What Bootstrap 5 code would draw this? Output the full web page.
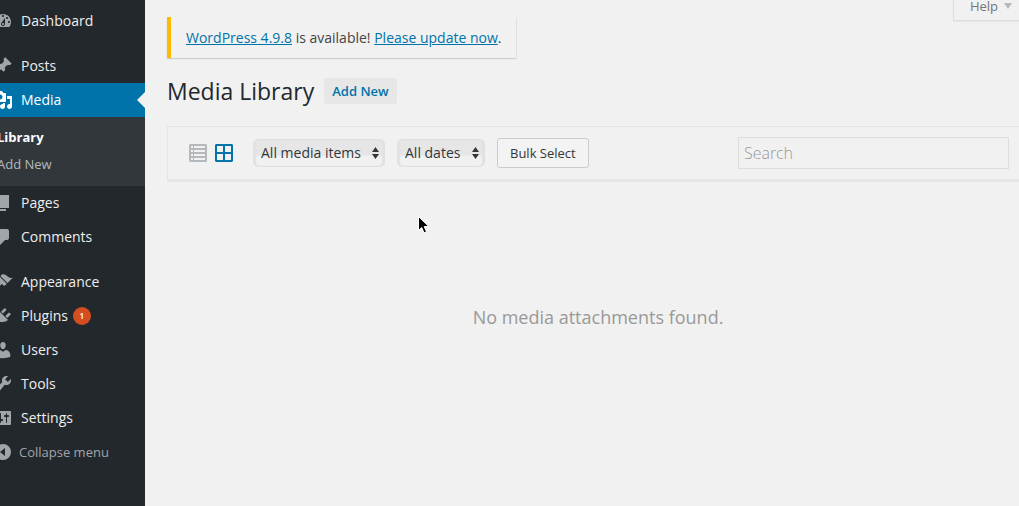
<!DOCTYPE html>
<html lang="en">
<head>
<meta charset="utf-8">
<meta name="viewport" content="width=device-width, initial-scale=1">
<title>Media Library</title>
<link href="https://cdn.jsdelivr.net/npm/bootstrap@5.3.0/dist/css/bootstrap.min.css" rel="stylesheet">
<style>
body { font-family: "Open Sans", sans-serif; font-size: 14px; line-height: 20px; background: #f1f1f1; color: #444; }
a { color: #0073aa; }
svg { display: block; fill: currentColor; flex: none; }

/* admin menu */
.admin-menu { width: 145px; background: #23282d; padding-top: 4px; overflow: hidden; }
.menu-entry { height: 34px; padding: 0; color: #eee; text-decoration: none; gap: 8px; width: 100%; border: 0; background: none; text-align: left; }
.menu-entry svg { width: 20px; height: 20px; margin-left: -7px; color: #a0a5aa; }
.menu-gap { height: 11px; }
.menu-entry.current { background: #0073aa; color: #fff; position: relative; }
.menu-entry.current svg { color: #fff; }
.menu-entry.current::after { content: ""; position: absolute; right: 0; top: 9px; border: 8px solid transparent; border-right-color: #f1f1f1; border-left: 0; }
.menu-entry.collapse-btn { color: #a0a5aa; font-size: 13px; gap: 6px; }
.sub-entries { background: #32373c; padding: 7px 0 8px; }
.sub-entries a { display: block; margin-left: -3px; line-height: 27px; font-size: 13px; color: #b4b9be; text-decoration: none; }
.sub-entries a.current-sub { color: #fff; font-weight: 700; }
.count-pill { width: 18px; height: 18px; margin-left: -3px; border-radius: 50%; background: #d54e21; color: #fff; font-size: 9px; font-weight: 600; line-height: 18px; text-align: center; }

/* content */
.content-area { padding-left: 22px; min-width: 0; }
.update-notice { margin-top: 17px; padding: 11px 15px 10px; border-left: 4px solid #ffba00; box-shadow: 0 1px 1px 0 rgba(0,0,0,.14), 1px 0 0 0 rgba(0,0,0,.04); }
.help-tab { height: 21px; padding: 0 7px 8px 16px; border: 1px solid #ddd; border-width: 0 0 1px 1px; background: none; color: #72777c; font-size: 13px; line-height: 12px; gap: 6px; box-shadow: 0 1px 1px rgba(0,0,0,.04); }
.help-tab svg { color: #b4b9be; }
.title-row { margin-top: 18px; gap: 10px; }
.page-title { font-size: 23px; font-weight: 400; line-height: 30px; color: #23282d; margin: 0; }
.add-new { background: #e7e7e7; color: #0073aa; font-size: 13px; font-weight: 600; line-height: 18px; padding: 4px 8px; border: 0; border-radius: 2px; }
.media-toolbar { margin-top: 20px; padding: 10px 10px 10px 21px; border: 1px solid #e5e5e5; border-width: 1px 0 3px 1px; }
.view-btn { border: 0; background: none; padding: 0; color: #b4b9be; }
.view-btn.active-view { color: #0073aa; }
.filters { margin-left: 20px; gap: 12px; }
.filter-box { appearance: none; height: 28px; border: 1px solid #e0e0e0; border-radius: 5px; padding: 0 23px 0 7px; font-size: 14px; line-height: 20px; color: #32373c; box-shadow: inset 2px 0 1px #e2e2e2, inset -2px 0 1px #e2e2e2;
  background: url("data:image/svg+xml,%3Csvg xmlns='http://www.w3.org/2000/svg' width='7' height='12'%3E%3Cpath fill='%2332373c' d='M3.500 0L7 5H0zM0 7h7L3.500 12z'/%3E%3C/svg%3E") right 5px center no-repeat, linear-gradient(#e6e6e6 55%, #f1f1f1 65%); }
.bulk-btn { height: 30px; padding: 0 12px; border: 1px solid #ccc; border-radius: 3px; background: #f3f3f3; color: #32373c; font-size: 13px; line-height: 28px; }
.search-box { width: 271px; height: 32px; padding: 0 5px; border: 1px solid #ddd; background: #f1f1f1; font-family: "Open Sans Light", "Open Sans", sans-serif; font-size: 16px; font-weight: 300; color: #32373c; }
.search-box::placeholder { color: #999; opacity: 1; }
.empty-area { position: relative; padding: 122px 0 0 10px; }
.empty-text { font-size: 18px; line-height: 27px; color: #999; margin: 0; }
.pointer { position: absolute; left: 250px; top: 33px; }
</style>
</head>
<body>
<div class="d-flex min-vh-100">
  <nav class="admin-menu flex-shrink-0" aria-label="Main menu">
    <a href="#" class="menu-entry d-flex align-items-center"><svg viewBox="0 0 20 20"><path fill-rule="evenodd" d="M3.760 16h12.480c1.100-1.370 1.760-3.110 1.760-5 0-4.420-3.580-8-8-8s-8 3.580-8 8c0 1.890.66 3.630 1.760 5zM10 4c.55 0 1 .45 1 1s-.45 1-1 1-1-.45-1-1 .45-1 1-1zM6 6c.55 0 1 .45 1 1s-.45 1-1 1-1-.45-1-1 .45-1 1-1zm8 0c.55 0 1 .45 1 1s-.45 1-1 1-1-.45-1-1 .45-1 1-1zm-5.370 5.550L12 7v6c0 1.100-.9 2-2 2s-2-.9-2-2c0-.57.24-1.080.63-1.450zM4 10c.55 0 1 .45 1 1s-.45 1-1 1-1-.45-1-1 .45-1 1-1zm12 0c.55 0 1 .45 1 1s-.45 1-1 1-1-.45-1-1 .45-1 1-1zm-5 3c0-.55-.45-1-1-1s-1 .45-1 1 .45 1 1 1 1-.45 1-1z"/></svg><span>Dashboard</span></a>
    <div class="menu-gap"></div>
    <a href="#" class="menu-entry d-flex align-items-center"><svg viewBox="0 0 20 20"><path d="M10.440 3.020l1.820-1.820 6.360 6.350-1.830 1.820c-1.050-.68-2.480-.57-3.410.36l-.75.75c-.92.93-1.040 2.350-.35 3.410l-1.830 1.820-2.410-2.410-2.800 2.790c-.42.42-3.380 2.710-3.800 2.290s1.860-3.390 2.280-3.810l2.790-2.790L4.100 9.360l1.830-1.820c1.050.69 2.480.57 3.400-.36l.75-.75c.93-.92 1.050-2.350.36-3.410z"/></svg><span>Posts</span></a>
    <a href="#" class="menu-entry current d-flex align-items-center" aria-current="page"><svg viewBox="0 0 20 20"><path fill-rule="evenodd" d="M13 11V4c0-.55-.45-1-1-1h-1.670L9 1H5L3.670 3H2c-.55 0-1 .45-1 1v7c0 .55.45 1 1 1h10c.55 0 1-.45 1-1zM7 4.500c1.380 0 2.500 1.120 2.500 2.500S8.380 9.500 7 9.500 4.500 8.380 4.500 7 5.620 4.500 7 4.500zM14 6h5v10.500c0 1.380-1.120 2.500-2.500 2.500S14 17.880 14 16.500s1.120-2.500 2.500-2.500c.17 0 .34.02.5.05V9h-3V6zm-4 8.050V13h2v3.500c0 1.380-1.120 2.500-2.500 2.500S7 17.880 7 16.500 8.120 14 9.500 14c.17 0 .34.02.5.05z"/></svg><span>Media</span></a>
    <div class="sub-entries">
      <a href="#" class="current-sub">Library</a>
      <a href="#">Add New</a>
    </div>
    <a href="#" class="menu-entry d-flex align-items-center"><svg viewBox="0 0 20 20"><path d="M6 15V2h10v13H6zm-1 1h8v2H3V5h2v11z"/></svg><span>Pages</span></a>
    <a href="#" class="menu-entry d-flex align-items-center"><svg viewBox="0 0 20 20"><path d="M5 2h9c1.100 0 2 .9 2 2v7c0 1.100-.9 2-2 2h-2l-5 5v-5H5c-1.100 0-2-.9-2-2V4c0-1.100.9-2 2-2z"/></svg><span>Comments</span></a>
    <div class="menu-gap"></div>
    <a href="#" class="menu-entry d-flex align-items-center"><svg viewBox="0 0 20 20"><path d="M14.480 11.060L7.410 3.990l1.500-1.500c.5-.56 2.300-.47 3.510.32 1.210.8 1.430 1.280 2.910 2.100 1.180.64 2.450 1.260 4.450.85zm-.71.71L6.700 4.700 4.930 6.470c-.39.39-.39 1.020 0 1.410l1.060 1.060c.39.39.39 1.030 0 1.420-.6.6-1.430 1.110-2.210 1.690-.35.26-.7.53-1.010.84C1.430 14.230.4 16.080 1.400 17.070c.99 1 2.840-.03 4.180-1.360.31-.31.58-.66.85-1.020.57-.78 1.080-1.610 1.690-2.210.39-.39 1.020-.39 1.410 0l1.060 1.060c.39.39 1.020.39 1.410 0z"/></svg><span>Appearance</span></a>
    <a href="#" class="menu-entry d-flex align-items-center"><svg viewBox="0 0 20 20"><path d="M13.110 4.360L9.870 7.600 8 5.730l3.240-3.240c.35-.34 1.050-.2 1.560.32.52.51.66 1.210.31 1.550zm-8 1.770l.91-1.120 9.010 9.010-1.190.84c-.71.71-2.630 1.160-3.820 1.160H6.140L4.900 17.260c-.59.59-1.540.59-2.120 0-.59-.58-.59-1.530 0-2.120l1.240-1.240v-3.880c0-1.130.4-3.190 1.090-3.890zm7.260 3.970l3.240-3.240c.34-.35 1.040-.21 1.550.31.52.51.66 1.210.31 1.550l-3.240 3.250z"/></svg><span>Plugins</span><span class="count-pill">1</span></a>
    <a href="#" class="menu-entry d-flex align-items-center"><svg viewBox="0 0 20 20"><path d="M10 9.250c-2.270 0-2.730-3.440-2.730-3.440C7 4.020 7.820 2 9.970 2c2.160 0 2.980 2.020 2.710 3.810 0 0-.41 3.440-2.680 3.440zm0 2.570L12.720 10c2.390 0 4.520 2.330 4.520 4.530v2.490s-3.650 1.130-7.240 1.130c-3.650 0-7.240-1.130-7.240-1.130v-2.490c0-2.250 1.940-4.480 4.470-4.480z"/></svg><span>Users</span></a>
    <a href="#" class="menu-entry d-flex align-items-center"><svg viewBox="0 0 20 20"><path fill-rule="evenodd" d="M16.680 9.770c-1.340 1.340-3.300 1.670-4.950.99l-5.410 6.520c-.99.99-2.590.99-3.580 0s-.99-2.590 0-3.570l6.520-5.420c-.68-1.650-.35-3.610.99-4.950 1.280-1.280 3.120-1.620 4.720-1.060l-2.890 2.890 2.820 2.820 2.860-2.870c.53 1.580.18 3.390-1.080 4.650zM3.810 16.210c.4.39 1.040.39 1.430 0 .4-.4.4-1.040 0-1.430-.39-.4-1.030-.4-1.430 0-.39.39-.39 1.030 0 1.430z"/></svg><span>Tools</span></a>
    <a href="#" class="menu-entry d-flex align-items-center"><svg viewBox="0 0 20 20"><path fill-rule="evenodd" d="M18 16V4c0-.55-.45-1-1-1H3c-.55 0-1 .45-1 1v12c0 .55.45 1 1 1h14c.55 0 1-.45 1-1zM8 11h1c.55 0 1 .45 1 1s-.45 1-1 1H8v1.500c0 .28-.22.5-.5.5s-.5-.22-.5-.5V13H6c-.55 0-1-.45-1-1s.45-1 1-1h1V5.500c0-.28.22-.5.5-.5s.5.22.5.5V11zm5-2h-1c-.55 0-1-.45-1-1s.45-1 1-1h1V5.500c0-.28.22-.5.5-.5s.5.22.5.5V7h1c.55 0 1 .45 1 1s-.45 1-1 1h-1v5.500c0 .28-.22.5-.5.5s-.5-.22-.5-.5V9z"/></svg><span>Settings</span></a>
    <button type="button" class="menu-entry collapse-btn d-flex align-items-center"><svg viewBox="0 0 20 20"><path fill-rule="evenodd" d="M10 2a8 8 0 1 1 0 16a8 8 0 0 1 0-16zM12 6v8l-5-4z"/></svg><span>Collapse menu</span></button>
  </nav>

  <main class="content-area flex-grow-1">
    <div class="d-flex justify-content-between align-items-start">
      <div class="update-notice"><a href="#">WordPress 4.9.8</a> is available! <a href="#">Please update now</a>.</div>
      <button type="button" class="help-tab d-flex align-items-center">Help <svg width="8" height="6" viewBox="0 0 8 6"><path d="M0 0h8L4 6z"/></svg></button>
    </div>
    <div class="title-row d-flex align-items-center">
      <h1 class="page-title">Media Library</h1>
      <button type="button" class="add-new">Add New</button>
    </div>
    <div class="media-toolbar d-flex align-items-center">
      <button type="button" class="view-btn" aria-label="List view"><svg width="18" height="18" viewBox="0 0 18 18"><path fill-rule="evenodd" d="M1 0h16l1 1v16l-1 1H1l-1-1V1zM2 2v2h2V2zM5 2v2h11V2zM2 6v2h2V6zM5 6v2h11V6zM2 10v2h2v-2zM5 10v2h11v-2zM2 14v2h2v-2zM5 14v2h11v-2z"/></svg></button>
      <button type="button" class="view-btn active-view ms-2" aria-label="Grid view"><svg width="18" height="18" viewBox="0 0 18 18"><path fill-rule="evenodd" d="M1 0h16l1 1v16l-1 1H1l-1-1V1zM2 2v6h6V2zM10 2v6h6V2zM2 10v6h6v-6zM10 10v6h6v-6z"/></svg></button>
      <div class="filters d-flex align-items-center">
        <select class="filter-box" aria-label="Filter by type"><option>All media items</option></select>
        <select class="filter-box" aria-label="Filter by date"><option>All dates</option></select>
        <button type="button" class="bulk-btn">Bulk Select</button>
      </div>
      <input type="search" class="search-box ms-auto" placeholder="Search" aria-label="Search media">
    </div>
    <div class="empty-area text-center">
      <p class="empty-text">No media attachments found.</p>
      <svg class="pointer" width="14" height="20" viewBox="0 0 14 20" aria-hidden="true"><path fill="#000" stroke="#fff" d="M1.500 1.500v14l3.200-3 2.300 5.300 2.500-1.100-2.300-5.200h4.600z"/></svg>
    </div>
  </main>
</div>
<script src="https://cdn.jsdelivr.net/npm/bootstrap@5.3.0/dist/js/bootstrap.bundle.min.js"></script>
</body>
</html>
